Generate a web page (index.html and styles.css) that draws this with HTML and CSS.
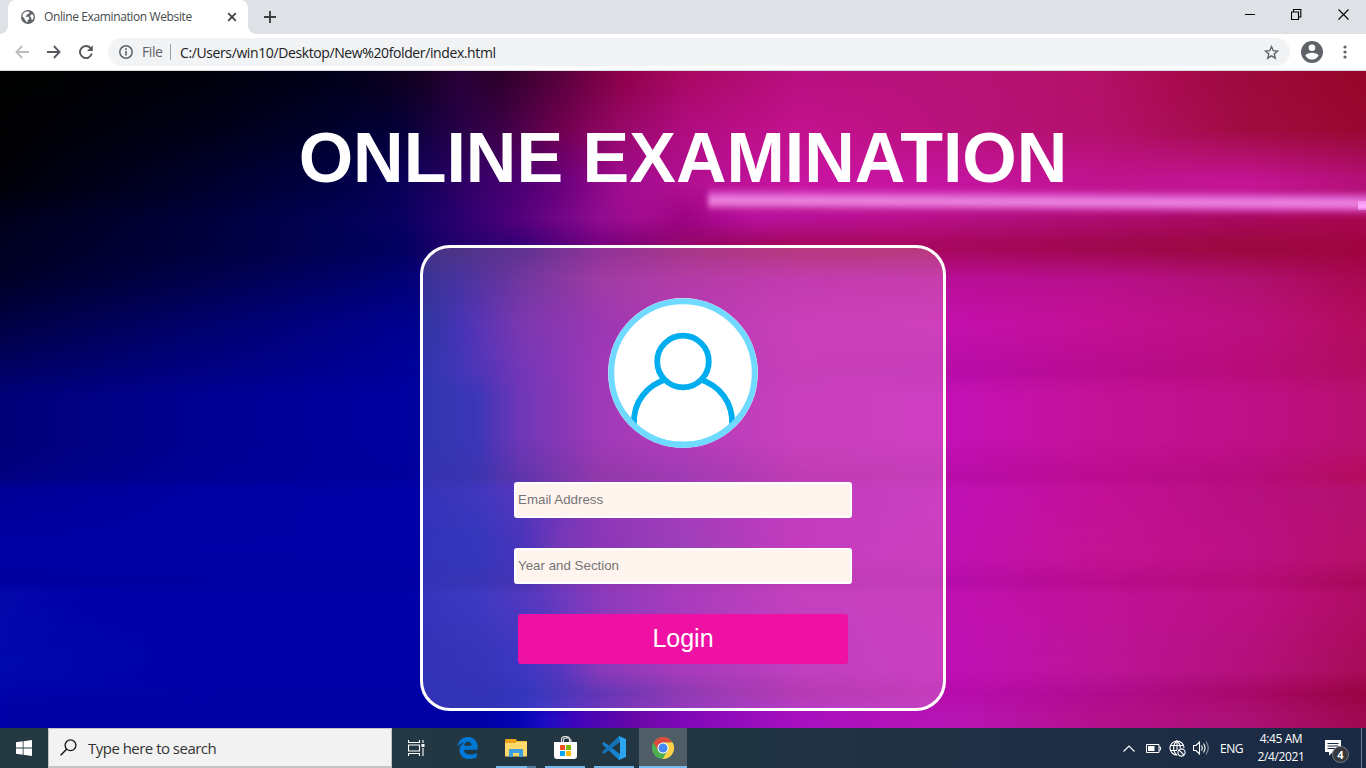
FILE: index.html
```html
<!DOCTYPE html>
<html lang="en">
<head>
<meta charset="utf-8">
<title>Online Examination Website</title>
<link rel="stylesheet" href="styles.css">
</head>
<body>
<header class="tabs">
  <div class="tab">
    <svg class="globe" width="14" height="14" viewBox="0 0 14 14"><circle cx="7" cy="7" r="7" fill="#5f6368"/><path d="M1.300 6.600C1.600 4.200 3 2.300 5 1.600L7.600 1.400 8.600 2.400 7.800 3.800 6.200 4.200 5.600 5.400 4.400 6 5 6.800 7.600 6.800 8.400 8.200 8 9.400 6.800 9.800 6.600 11.400 5.600 12.500 4.800 10.600 3.600 9.800 3.400 8.200ZM9.800 4.600 12 4.400 12.700 7 11.800 9.800 10.400 9.400 10.200 7.400 9 6.400Z" fill="#fff"/></svg>
    <span class="tab-title">Online Examination Website</span>
    <svg class="tab-close" width="10" height="10" viewBox="0 0 10 10"><path d="M1.200 1.200 8.800 8.800M8.800 1.200 1.200 8.800" stroke="#3c4043" stroke-width="1.700"/></svg>
  </div>
  <svg class="new-tab" width="12" height="12" viewBox="0 0 12 12"><path d="M6 0V12M0 6H12" stroke="#3c4043" stroke-width="1.900"/></svg>
  <div class="window-buttons">
    <svg width="10" height="12" viewBox="0 0 10 12"><path d="M0 6.500H10" stroke="#000"/></svg>
    <svg width="11" height="11" viewBox="0 0 11 11"><path d="M.500 3H7.500V10.500H.500ZM2.500 3V.500H9.800V8H7.500" fill="none" stroke="#000" stroke-width="1.100"/></svg>
    <svg width="11" height="11" viewBox="0 0 11 11"><path d="M.500.500 10.500 10.500M10.500.500.500 10.500" stroke="#000" stroke-width="1.100"/></svg>
  </div>
</header>
<nav class="toolbar">
  <svg width="14" height="14" viewBox="0 0 14 14"><path d="M14 7H1.600M7.200 1 1.400 7 7.200 13" fill="none" stroke="#babcbe" stroke-width="1.800"/></svg>
  <svg width="14" height="14" viewBox="0 0 14 14"><path d="M0 7H12.400M6.800 1 12.600 7 6.800 13" fill="none" stroke="#55595e" stroke-width="1.800"/></svg>
  <svg width="14" height="14" viewBox="0 0 14 14"><path d="M11.600 3.200A6 6 0 1 0 12.800 8.600" fill="none" stroke="#55595e" stroke-width="1.900"/><path d="M13.800.200V6H8Z" fill="#55595e"/></svg>
  <div class="omnibox">
    <svg width="14" height="14" viewBox="0 0 14 14"><circle cx="7" cy="7" r="6.200" fill="none" stroke="#5f6368" stroke-width="1.500"/><path d="M7 6V10.500M7 3.300V4.900" stroke="#5f6368" stroke-width="1.600"/></svg>
    <span class="scheme">File</span>
    <span class="url">C:/Users/win10/Desktop/New%20folder/index.html</span>
    <svg class="star" width="15" height="15" viewBox="0 0 15 15"><path d="M7.500 1.600 9.200 5.700 13.600 6 10.200 8.900 11.300 13.200 7.500 10.900 3.700 13.200 4.800 8.900 1.400 6 5.800 5.700Z" fill="none" stroke="#5f6368" stroke-width="1.400"/></svg>
  </div>
  <svg class="profile" width="22" height="22" viewBox="0 0 22 22"><circle cx="11" cy="11" r="11" fill="#5f6368"/><circle cx="11" cy="6.800" r="3.300" fill="#fff"/><path d="M4.400 14.600C5.400 12.600 8.400 11.800 11 11.800S16.600 12.600 17.600 14.600C16 17.500 13.800 18.700 11 18.700S6 17.500 4.400 14.600Z" fill="#fff"/></svg>
  <svg class="dots" width="4" height="14" viewBox="0 0 4 14"><g fill="#5f6368"><circle cx="2" cy="2" r="1.600"/><circle cx="2" cy="7" r="1.600"/><circle cx="2" cy="12" r="1.600"/></g></svg>
</nav>
<main class="page">
  <div class="wall w0"></div><div class="wall w1"></div><div class="wall w2"></div><div class="wall w3"></div><div class="wall w4"></div><div class="wall w5"></div><div class="wall w6"></div><div class="wall w7"></div><div class="wall w8"></div><div class="wall w9"></div><div class="wall w10"></div><div class="wall w11"></div><div class="wall w12"></div><div class="wall w13"></div><div class="wall w14"></div><div class="wall w15"></div><div class="wall w16"></div>
  <div class="beam"></div><div class="beam-end"></div>
  <div class="content">
    <h1>ONLINE EXAMINATION</h1>
    <form class="card">
      <svg class="avatar" width="150" height="150" viewBox="0 0 150 150"><circle cx="75" cy="75" r="75" fill="#e6e9f4"/><circle cx="75" cy="75" r="71.700" fill="#fff" stroke="#6fd9ff" stroke-width="5.800"/><path d="M26 126C25 104 39 87 59 81M91 81C111 87 125 104 124 126" fill="none" stroke="#00adef" stroke-width="5.800"/><circle cx="75" cy="63.500" r="25.800" fill="#fff" stroke="#00adef" stroke-width="5.800"/><path d="M17 117.200A71.700 71.700 0 0 0 133 117.200" fill="none" stroke="#6fd9ff" stroke-width="5.800"/></svg>
      <input type="text" placeholder="Email Address">
      <input type="text" placeholder="Year and Section">
      <button type="button">Login</button>
    </form>
  </div>
</main>
<footer class="taskbar">
  <div class="start"><svg width="16" height="16" viewBox="0 0 16 16"><path d="M0 2.300 6.700 1.300V7.600H0ZM7.500 1.200 16 0V7.600H7.500ZM0 8.400H6.700V14.700L0 13.700ZM7.500 8.400H16V16L7.500 14.800Z" fill="#fff"/></svg></div>
  <div class="search"><svg width="17" height="17" viewBox="0 0 17 17"><circle cx="10.500" cy="6.300" r="5.400" fill="none" stroke="#111" stroke-width="1.300"/><path d="M6.600 10.200.600 16.200" stroke="#111" stroke-width="1.400"/></svg><span>Type here to search</span></div>
  <div class="apps">
    <div class="app"><svg width="17" height="16" viewBox="0 0 17 16"><path d="M.500 0V2.500H11.500V0M.500 5H11.500V11H.500ZM.500 16V13.500H11.500V16M15 0V3M15 8V16" fill="none" stroke="#fff" stroke-width="1.100"/><path d="M13.500 4H16.500V7H13.500Z" fill="#fff"/></svg></div>
    <div class="app edge"><svg width="21" height="22" viewBox="0 0 21 22"><path d="M.300 9.800C1.200 3.800 5.200 0 10.800 0 17 0 20.700 4.400 20.700 10.400V12.700H7C7.200 16 9.800 17.600 13.300 17.600 15.900 17.600 18 16.900 19.800 15.800V20.300C17.900 21.400 15.400 22 12.500 22 6.400 22 2.500 18.500 2.500 13.200 2.500 9.600 4.600 6.700 7.700 5.200 4.600 5.700 2 7.300.300 9.800ZM7.100 8.800H14.500C14.500 6.400 13.300 4.800 11 4.800 8.800 4.800 7.400 6.600 7.100 8.800Z" fill="#0078d7"/></svg></div>
    <div class="app open folder"><svg width="22" height="19" viewBox="0 0 22 19"><path d="M0 1Q0 0 1 0H11L12 2H21Q22 2 22 3V17H0Z" fill="#e8a317"/><path d="M0 4H10L12 2.500H22V17.500H0Z" fill="#ffd96b"/><path d="M4 18V11Q4 10 5 10H17Q18 10 18 11V18H14V14H8V18Z" fill="#3f9ee0"/></svg></div>
    <div class="app open"><svg width="23" height="24" viewBox="0 0 23 24"><path d="M7.500 7V3.500Q7.500.700 10.500.700H12Q15.500.700 15.500 3.500V7M9.500 6V4Q9.500 2 13 2 17 2 17 5V7" fill="none" stroke="#ddd" stroke-width="1.200"/><path d="M0 6H23V20Q23 23 20 23H3Q0 23 0 20Z" fill="#fff"/><path d="M6 9H11V14H6Z" fill="#f25022"/><path d="M12 9H17V14H12Z" fill="#7fba00"/><path d="M6 15H11V20H6Z" fill="#00a4ef"/><path d="M12 15H17V20H12Z" fill="#ffb900"/></svg></div>
    <div class="app open"><svg width="24" height="24" viewBox="0 0 24 24"><path d="M0 8 2 6 18 18V24H17Z" fill="#1684cf"/><path d="M0 16 2 18 18 6V0H17Z" fill="#1272b6"/><path d="M17 0 18 6V18L17 24 24 21V3Z" fill="#2ba5ef"/></svg></div>
    <div class="app open current"><svg width="22" height="22" viewBox="0 0 22 22"><circle cx="11" cy="11" r="11" fill="#4caf50"/><path d="M1.500 5.500A11 11 0 0 1 20.500 5.500H11L6.300 13.700Z" fill="#dc4a3c"/><path d="M20.500 5.500A11 11 0 0 1 10.500 22L15.800 13.700 11 5.500Z" fill="#ffd147"/><circle cx="11" cy="11" r="5.600" fill="#fff"/><circle cx="11" cy="11" r="4.500" fill="#4688f1"/></svg></div>
  </div>
  <div class="tray">
    <svg width="12" height="7" viewBox="0 0 12 7"><path d="M.500 6.500 6 1 11.500 6.500" fill="none" stroke="#fff" stroke-width="1.200"/></svg>
    <svg class="battery" width="15" height="9" viewBox="0 0 15 9"><path d="M.500.500H13V8.500H.500ZM13 3H14.500V6H13" fill="none" stroke="#fff"/><path d="M2 2H8.500V7H2Z" fill="#fff"/></svg>
    <svg class="net" width="17" height="17" viewBox="0 0 17 17"><g fill="none" stroke="#fff" stroke-width="1.100"><path d="M8.500 15A7 7 0 1 1 15 8M1 5.500H14.500M1 10.500H8M8 1C3.500 4 3.500 12 8 15M8 1C10.500 3 11.300 5.500 11.300 8M8 1V10"/><circle cx="12.500" cy="12.500" r="3.600"/><path d="M10 10 15 15"/></g></svg>
    <svg class="volume" width="17" height="14" viewBox="0 0 17 14"><g fill="none" stroke="#fff" stroke-width="1.100"><path d="M.500 4.500H3L6.500 1V13L3 9.500H.500ZM8.500 4.500Q10 7 8.500 9.500M10.500 2.500Q13.500 7 10.500 11.500"/><path d="M13 .500Q17.500 7 13 13.500" stroke="#8b94a1"/></g></svg>
    <span class="lang">ENG</span>
    <div class="clock"><span>4:45 AM</span><span>2/4/2021</span></div>
    <div class="notice"><svg width="16" height="16" viewBox="0 0 16 16"><path d="M0 0H16V12H8L4 15.500V12H0Z" fill="#fff"/><path d="M2.500 3.500H13.500M2.500 6H13.500M2.500 8.500H10" stroke="#1b2a43"/></svg><b>4</b></div>
  </div>
</footer>
</body>
</html>
```
FILE: styles.css
```css
* { box-sizing: border-box; }
body { margin: 0; width: 1366px; height: 768px; overflow: hidden; display: flex; flex-direction: column; font-family: "Open Sans", "Noto Sans", sans-serif; }
svg { display: block; flex: none; }

.tabs { height: 34px; background: #dee1e6; display: flex; }
.tab { position: relative; width: 240px; margin-left: 8px; background: #fff; border-radius: 8px 8px 0 0; display: flex; align-items: center; padding: 0 11px 0 13px; }
.tab::before, .tab::after { content: ""; position: absolute; bottom: 0; width: 8px; height: 8px; }
.tab::before { left: -8px; background: radial-gradient(circle at 0 0, transparent 7.500px, #fff 8px); }
.tab::after { right: -8px; background: radial-gradient(circle at 100% 0, transparent 7.500px, #fff 8px); }
.tab-title { margin-left: 9px; font-size: 12px; letter-spacing: -.38px; color: #45494d; white-space: nowrap; padding-bottom: 1px; }
.tab-close { margin-left: auto; }
.new-tab { margin: 11px 0 0 16px; }
.window-buttons { display: flex; align-items: center; gap: 36px; margin: -6px 17px 0 auto; }

.toolbar { height: 37px; background: #fff; border-bottom: 1px solid #d9dbdd; display: flex; align-items: center; padding: 0 19px 0 15px; gap: 18px; }
.omnibox { width: 1182px; height: 28px; border-radius: 14px; background: #f1f3f4; display: flex; align-items: center; padding: 0 11px; margin-left: -3px; font-size: 14px; letter-spacing: -.39px; white-space: nowrap; }
.scheme { margin-left: 9px; color: #5f6368; width: 29px; border-right: 1px solid #9aa0a6; line-height: 16px; }
.url { margin-left: 9px; color: #202124; }
.star { margin-left: auto; }
.profile { margin-left: -7px; }
.dots { margin-left: 2px; }

.page { height: 657px; position: relative; overflow: hidden; display: grid; grid-template: 657px / 1366px; }
.wall, .content { grid-area: 1 / 1; }
.wall { mask-image: linear-gradient(transparent var(--from), #000 var(--to)); }
.w0 { mask-image: none; background: linear-gradient(90deg, #000300 0, #00000a 200px, #00001a 330px, #0a001c 380px, #16001f 420px, #2a0038 460px, #2b0028 500px, #56003c 560px, #8c0048 620px, #a80860 683px, #b81080 800px, #b81478 950px, #b41068 1100px, #a80a4c 1180px, #9c0a3c 1250px, #960628 1366px); }
.w1 { --from: 0px; --to: 59px; background: linear-gradient(90deg, #000002 0, #000018 200px, #00002c 330px, #040038 400px, #280048 460px, #3c0048 500px, #700050 560px, #960868 620px, #b00c80 683px, #c4128e 800px, #b8127c 950px, #b4106c 1100px, #a00c40 1250px, #980830 1366px); }
.w2 { --from: 59px; --to: 109px; background: linear-gradient(90deg, #000008 0, #00002c 200px, #000044 330px, #080058 400px, #2c0064 460px, #4c0074 520px, #68007c 560px, #a00c90 620px, #b00f90 683px, #c814a0 800px, #c414a0 950px, #c01490 1100px, #c41494 1250px, #b41078 1366px); }
.w3 { --from: 115px; --to: 148px; background: linear-gradient(90deg, #00001c 0, #00003c 200px, #000054 330px, #080060 400px, #2c0070 460px, #54007c 520px, #900c90 600px, #a40c90 640px, #9c0484 683px, #b8109c 750px, #b8108c 900px, #ac0c70 1100px, #a8085c 1250px, #a80850 1366px); }
.w4 { --from: 148px; --to: 172px; background: linear-gradient(90deg, #000022 0, #00003e 200px, #000060 400px, #1c0068 440px, #380076 520px, #760080 600px, #92066c 683px, #a60860 800px, #a80860 950px, #a00850 1100px, #9c0840 1250px, #a00440 1366px); }
.w5 { --from: 180px; --to: 208px; background: linear-gradient(90deg, #000028 0, #00004c 200px, #000074 400px, #1a0088 460px, #4c0487 520px, #880b8d 600px, #a10b92 683px, #b50b9c 800px, #b80e98 940px, #b8108c 1100px, #b01070 1250px, #a80850 1366px); }
.w6 { --from: 208px; --to: 254px; background: linear-gradient(90deg, #000044 0, #00006c 200px, #000090 400px, #00058d 430px, #1a01a6 460px, #5b069c 520px, #8306a1 600px, #a60ba1 683px, #bd10a8 800px, #c410ac 960px, #c41094 1100px, #bc1080 1250px, #b40c5c 1366px); }
.w7 { --from: 254px; --to: 299px; background: linear-gradient(90deg, #000062 0, #000082 200px, #000098 400px, #00049c 430px, #1404a8 460px, #5004a6 520px, #8808a6 600px, #a10ba6 683px, #bb0ea8 800px, #b80ca8 960px, #b80c90 1100px, #b80c78 1250px, #b00c60 1366px); }
.w8 { --from: 299px; --to: 324px; background: linear-gradient(90deg, #000078 0, #000092 200px, #0000a2 400px, #00059b 430px, #0a04a8 475px, #4a05a4 520px, #8708a5 600px, #a20cab 683px, #bc10ac 800px, #c410b4 960px, #c41298 1100px, #c01088 1250px, #b81070 1366px); }
.w9 { --from: 370px; --to: 406px; background: linear-gradient(90deg, #000080 0, #000096 200px, #00009e 400px, #0a029c 475px, #370296 520px, #780896 600px, #870aa0 683px, #b00ca0 800px, #b80ca8 960px, #bc0c90 1100px, #b40c7c 1250px, #b40c5c 1366px); }
.w10 { --from: 406px; --to: 420px; background: linear-gradient(90deg, #000098 0, #0000a4 200px, #0000a8 400px, #0f05af 475px, #2d05af 520px, #4605aa 560px, #7308aa 600px, #910aaa 683px, #b60cb0 800px, #c010b4 960px, #c41098 1100px, #b81080 1250px, #b41070 1366px); }
.w11 { --from: 420px; --to: 475px; background: linear-gradient(90deg, #0000a4 0, #0000a8 400px, #0005ac 475px, #1902aa 520px, #5505a5 560px, #6e05a5 600px, #870fa8 683px, #b60cae 800px, #c010b0 960px, #c41294 1100px, #bc1084 1250px, #b41068 1366px); }
.w12 { --from: 487px; --to: 512px; background: linear-gradient(90deg, #0000a0 0, #0000a4 400px, #0802a4 475px, #1902a0 520px, #4b05a0 560px, #6e05a0 600px, #8f0aa3 683px, #b00ca4 800px, #b60ca8 960px, #b80c8c 1100px, #b40c78 1250px, #a80858 1366px); }
.w13 { --from: 512px; --to: 524px; background: linear-gradient(90deg, #0408ac 0, #0000aa 90px, #0000a8 400px, #0a08b4 475px, #3208b0 540px, #6e0aad 600px, #950cae 683px, #b512ae 800px, #c010b0 960px, #c01298 1100px, #bc1084 1250px, #b00c64 1366px); }
.w14 { --from: 530px; --to: 589px; background: linear-gradient(90deg, #0008ac 0, #0000a8 200px, #0000a8 400px, #0402a5 475px, #0a05b4 520px, #2d05af 560px, #6a0aa8 600px, #920aaa 683px, #af10b0 800px, #c010b4 960px, #bc1498 1100px, #b4107c 1250px, #a80c58 1366px); }
.w15 { --from: 600px; --to: 622px; background: linear-gradient(90deg, #0004a8 0, #0000a6 400px, #0000a4 475px, #0205ac 530px, #3c04a4 600px, #730aa0 683px, #a50aa0 800px, #b80cac 960px, #b00c90 1100px, #a80868 1250px, #980440 1366px); }
.w16 { --from: 622px; --to: 645px; background: linear-gradient(90deg, #0000a6 0, #0000a4 470px, #0404b4 520px, #1c0cc4 545px, #4404b8 580px, #6c08a8 640px, #8008b8 683px, #a810c0 800px, #b814b4 960px, #b4108c 1100px, #ac1074 1250px, #a00850 1366px); }
.beam { position: absolute; left: 708px; top: 118px; width: 680px; height: 25px; background: linear-gradient(rgba(216, 60, 200, 0), #dc58d0 30%, #ec84dc 46%, #ea80dc 62%, #cc38ac 80%, rgba(190, 20, 140, 0)); transform: rotate(.27deg); filter: blur(2.500px); }
.beam-end { position: absolute; left: 1358px; top: 130px; width: 8px; height: 9px; background: linear-gradient(#f090e8, #ffa4fa 40%, #ffa4fa 70%, #e070d0); }

.content { position: relative; display: flex; flex-direction: column; align-items: center; font-family: "Liberation Sans", Arial, sans-serif; }
h1 { margin: 47px 0 0; font-size: 70px; line-height: 80px; color: #fff; white-space: nowrap; }
.card { width: 526px; height: 466px; margin-top: 47px; border: 3px solid #fff; border-radius: 30px; background: rgba(255, 255, 255, .2); display: flex; flex-direction: column; align-items: center; padding-top: 50px; }
input { width: 338px; height: 36px; margin: 0 0 30px; padding: 0 2px 2px; border: 2px solid #fff; border-radius: 3px; background: #fff4ee; font: 13.333px "Liberation Sans", Arial, sans-serif; }
input::placeholder { color: #757575; opacity: 1; }
.avatar { margin-bottom: 34px; }
button { width: 330px; height: 50px; padding: 0 0 2px; border: 0; border-radius: 3px; background: #ef10a4; color: #fff; font: 25px "Liberation Sans", Arial, sans-serif; }

.taskbar { height: 40px; background: linear-gradient(90deg, #233a43, #223642 45%, #1d2e44 80%, #1a2944); display: flex; color: #fff; }
.start { width: 48px; display: grid; place-items: center; }
.search { width: 344px; background: #f2f2f2; border: 1px solid #c4c4c4; border-bottom-width: 2px; display: flex; align-items: center; padding-left: 11px; gap: 11px; color: #333; font-size: 15px; letter-spacing: -.52px; }
.apps { display: flex; gap: 1px; }
.app { width: 48px; height: 40px; display: grid; place-items: center; }
.app.edge { margin-left: 2px; }
.open { background: linear-gradient(#76b9ed, #76b9ed) 50% 100% / 40px 2px no-repeat; }
.folder { background: linear-gradient(90deg, #76b9ed 31px, #4d7a9d 31px) 50% 100% / 40px 2px no-repeat; }
.current { background: linear-gradient(#76b9ed, #76b9ed) 0 100% / 48px 2px no-repeat, #4e5d66; }
.tray { margin-left: auto; display: flex; align-items: center; border-right: 1px solid #71798a; margin-right: 4px; padding-right: 12px; font-size: 12px; }
.battery { margin-left: 11px; }
.net { margin-left: 8px; }
.volume { margin-left: 7px; }
.lang { margin-left: 10px; letter-spacing: -.5px; width: 25px; }
.clock { width: 62px; margin-left: 5px; display: flex; flex-direction: column; align-items: center; line-height: 18px; letter-spacing: -.4px; white-space: nowrap; }
.notice { position: relative; width: 24px; margin-left: 13px; }
.notice b { position: absolute; left: 7px; top: 6px; width: 17px; height: 17px; border-radius: 50%; background: #35383d; border: 1px solid #777b80; font-size: 11px; line-height: 15px; text-align: center; }
```
